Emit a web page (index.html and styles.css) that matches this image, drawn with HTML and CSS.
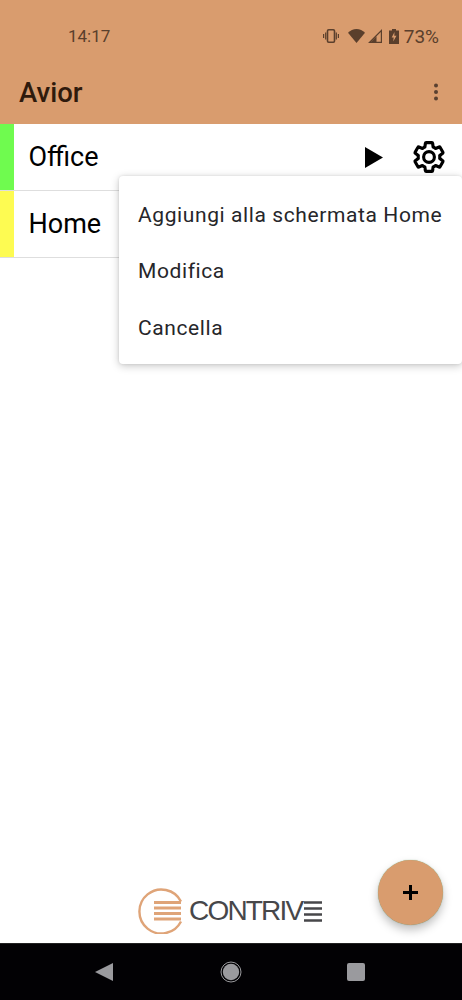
FILE: index.html
```html
<!DOCTYPE html>
<html lang="it">
<head>
<meta charset="utf-8">
<title>Avior</title>
<link rel="stylesheet" href="styles.css">
</head>
<body>
<div class="screen">
  <header class="appbar">
    <div class="status">
      <span class="time">14:17</span>
      <div class="status-icons">
        <svg class="si-vib" width="16" height="14" viewBox="0 0 16 14"><rect x="4.500" y=".8" width="7" height="12.400" rx="1.200" fill="none" stroke="currentColor" stroke-width="1.600"/><path d="M2.700 3.500v7M.6 5v4M13.300 3.500v7M15.400 5v4" stroke="currentColor" stroke-width="1.200" fill="none"/></svg>
        <svg class="si-wifi" width="17" height="14" viewBox="0 0 17 14"><path d="M0 3.800C2.300 1.400 5.200 0 8.500 0S14.700 1.400 17 3.800L8.500 14z" fill="currentColor"/></svg>
        <svg class="si-sig" width="14" height="14" viewBox="0 0 14 14"><path d="M14 0v14H0zM12.800 3L3 12.800h9.800z" fill="currentColor" fill-rule="evenodd"/><path d="M8.500 7.300V13H2.800z" fill="currentColor"/></svg>
        <svg class="si-bat" width="10" height="15" viewBox="0 0 10 15"><path d="M3 0h4v1.500h3V15H0V1.500h3z" fill="currentColor"/><path d="M5.500 3L2.700 8.500h2L4.200 12.500 7.500 6.800H5.300z" fill="#d99c6e"/></svg>
        <span class="pct">73%</span>
      </div>
    </div>
    <div class="toolbar">
      <h1 class="title">Avior</h1>
      <svg class="kebab" width="6" height="18" viewBox="0 0 6 18"><circle cx="3" cy="2.500" r="2" fill="currentColor"/><circle cx="3" cy="9" r="2" fill="currentColor"/><circle cx="3" cy="15.500" r="2" fill="currentColor"/></svg>
    </div>
  </header>

  <main class="list">
    <div class="row">
      <span class="swatch swatch-green"></span>
      <span class="name">Office</span>
      <svg class="play" width="18" height="21" viewBox="0 0 18 21"><path d="M0 0l18 10.500L0 21z" fill="#000"/></svg>
      <svg class="gear" width="36" height="36" viewBox="0 0 24 24"><path d="M19.140 12.940c.040-.300.060-.610.060-.940 0-.320-.020-.640-.070-.940l2.030-1.580a.490.490 0 0 0 .120-.610l-1.920-3.320a.488.488 0 0 0-.590-.220l-2.390.960c-.500-.380-1.030-.700-1.620-.940l-.360-2.540a.484.484 0 0 0-.480-.410h-3.840c-.240 0-.430.170-.470.410l-.360 2.540c-.590.240-1.130.570-1.620.940l-2.390-.960c-.220-.080-.470 0-.590.220L2.740 8.870c-.120.210-.080.470.120.610l2.030 1.580c-.050.300-.090.630-.090.940s.020.640.070.940l-2.030 1.580a.490.490 0 0 0-.120.610l1.920 3.320c.120.220.370.290.590.220l2.390-.960c.500.380 1.030.700 1.620.940l.360 2.540c.050.240.240.410.480.410h3.840c.240 0 .440-.170.470-.410l.360-2.540c.590-.240 1.130-.560 1.620-.940l2.390.960c.220.080.470 0 .590-.220l1.920-3.320c.120-.220.070-.470-.120-.610l-2.010-1.580zM12 15.600c-1.980 0-3.600-1.620-3.600-3.600s1.620-3.600 3.600-3.600 3.600 1.620 3.600 3.600-1.620 3.600-3.600 3.600z" fill="none" stroke="#000" stroke-width="2.100" stroke-linejoin="round"/></svg>
    </div>
    <div class="row">
      <span class="swatch swatch-yellow"></span>
      <span class="name">Home</span>
    </div>
  </main>

  <nav class="menu">
    <div class="menu-item">Aggiungi alla schermata Home</div>
    <div class="menu-item">Modifica</div>
    <div class="menu-item">Cancella</div>
  </nav>

  <footer class="brandbar">
    <div class="logo">
      <svg width="48" height="46" viewBox="0 0 48 46"><path d="M45 13.500A22 22 0 1 0 45 33.500" fill="none" stroke="#dfa478" stroke-width="2.400"/><path d="M18 14.500h27M18 20h27M18 25.500h27M18 31h27" stroke="#dfa478" stroke-width="2.800" fill="none"/></svg>
      <span class="logo-text">CONTRIV</span>
      <svg class="logo-e" width="18" height="21" viewBox="0 0 18 21"><path d="M0 1.500h18M0 7.500h18M0 13.500h18M0 19.500h18" stroke="#47474a" stroke-width="2.600" fill="none"/></svg>
    </div>
    <button class="fab" type="button" aria-label="Aggiungi">
      <svg width="15" height="15" viewBox="0 0 15 15"><path d="M7.500 0v15M0 7.500h15" stroke="#000" stroke-width="3" fill="none"/></svg>
    </button>
  </footer>

  <div class="navbar">
    <svg class="nav-back" width="18" height="18" viewBox="0 0 18 18"><path d="M18 0v18L0 9z" fill="#9a9a9e"/></svg>
    <svg class="nav-home" width="22" height="22" viewBox="0 0 22 22"><circle cx="11" cy="11" r="10" fill="none" stroke="#9a9a9e" stroke-width="1"/><circle cx="11" cy="11" r="8.200" fill="#9a9a9e"/></svg>
    <span class="nav-recent"></span>
  </div>
</div>
</body>
</html>
```

FILE: styles.css
```css
* { box-sizing: border-box; }
html, body { margin: 0; padding: 0; }
body {
  width: 462px;
  height: 1000px;
  overflow: hidden;
  background: #fff;
  font-family: Roboto, "Liberation Sans", sans-serif;
}
.screen {
  position: relative;
  width: 462px;
  height: 1000px;
  display: flex;
  flex-direction: column;
}
.appbar {
  height: 124px;
  flex: none;
  background: #d99c6e;
  color: #4a2f1d;
  display: flex;
  flex-direction: column;
}
.status {
  height: 72px;
  display: flex;
  align-items: center;
  justify-content: space-between;
  padding: 0 23px 0 68px;
}
.time { font-size: 17px; color: #5a3f2c; }
.status-icons { display: flex; align-items: center; color: #5a3f2c; }
.si-vib { margin-right: 9px; }
.si-wifi { margin-right: 3px; }
.si-sig { margin-right: 7px; }
.si-bat { margin-right: 5px; }
.pct { font-size: 19px; }
.toolbar {
  flex: 1;
  display: flex;
  align-items: center;
  justify-content: space-between;
  padding: 0 23px 12px 19px;
}
.title {
  margin: 0;
  font-size: 27.500px;
  font-weight: 500;
  color: #2f1a0c;
}
.kebab { color: #5a4030; }
.list { flex: none; }
.row {
  height: 67px;
  display: flex;
  align-items: center;
  border-bottom: 1px solid #dedede;
}
.swatch { width: 14px; height: 100%; flex: none; }
.swatch-green { background: #6ffb4f; }
.swatch-yellow { background: #fdfb52; }
.name {
  flex: 1;
  margin-left: 14.500px;
  font-size: 27px;
  color: #000;
}
.play { margin-right: 28px; }
.gear { margin-right: 15px; }
.menu {
  position: absolute;
  top: 176px;
  left: 119px;
  width: 343px;
  height: 188px;
  padding-top: 10px;
  background: #fff;
  border-radius: 4px;
  box-shadow: 0 2px 8px rgba(0, 0, 0, .22), 0 0 3px rgba(0, 0, 0, .1);
}
.menu-item {
  height: 56.500px;
  display: flex;
  align-items: center;
  padding: 1px 0 0 19px;
  font-size: 21px;
  letter-spacing: .6px;
  color: #26262a;
  white-space: nowrap;
}
.brandbar {
  margin-top: auto;
  height: 86px;
  flex: none;
  position: relative;
  display: flex;
  align-items: flex-end;
  padding: 0 0 9px 136px;
}
.logo { display: flex; align-items: center; }
.logo-text {
  margin-left: 5px;
  font-family: "Liberation Sans", sans-serif;
  font-size: 28px;
  letter-spacing: -1.800px;
  color: #47474a;
  line-height: 46px;
}
.logo-e { margin-left: 2px; }
.fab {
  position: absolute;
  left: 378px;
  top: 3px;
  width: 65px;
  height: 65px;
  padding: 0;
  border: none;
  border-radius: 50%;
  background: #d99c6e;
  box-shadow: 0 5px 10px rgba(0, 0, 0, .25), 0 0 1px rgba(60, 140, 60, .7);
  display: flex;
  align-items: center;
  justify-content: center;
}
.navbar {
  height: 57px;
  flex: none;
  background: #020104;
  position: relative;
  border-top: 1px solid #222;
  display: flex;
  align-items: center;
  padding-left: 95px;
}
.nav-back { margin-right: 107px; }
.nav-home { margin-right: 105px; }
.nav-recent {
  width: 18px;
  height: 18px;
  border-radius: 2px;
  background: #9a9a9e;
}
```
